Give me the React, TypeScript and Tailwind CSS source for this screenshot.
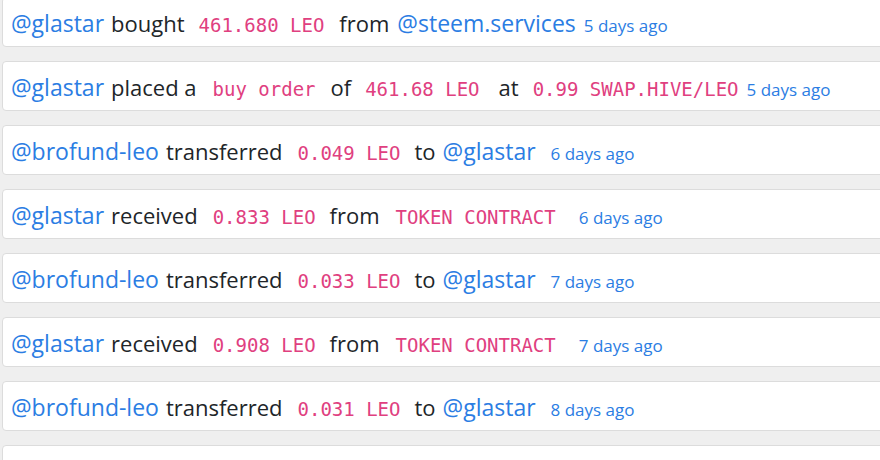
import React from 'react';

type Part = { t: string; k: 'user' | 'text' | 'code' | 'time'; ml: string };

const rows: Part[][] = [
  [
    { t: '@glastar', k: 'user', ml: '' },
    { t: 'bought', k: 'text', ml: 'ml-[7px]' },
    { t: '461.680 LEO', k: 'code', ml: 'ml-[14px]' },
    { t: 'from', k: 'text', ml: 'ml-[15px]' },
    { t: '@steem.services', k: 'user', ml: 'ml-[8px]' },
    { t: '5 days ago', k: 'time', ml: 'ml-[8px]' },
  ],
  [
    { t: '@glastar', k: 'user', ml: '' },
    { t: 'placed a', k: 'text', ml: 'ml-[7px]' },
    { t: 'buy order', k: 'code', ml: 'ml-[16px]' },
    { t: 'of', k: 'text', ml: 'ml-[15px]' },
    { t: '461.68 LEO', k: 'code', ml: 'ml-[14px]' },
    { t: 'at', k: 'text', ml: 'ml-[19px]' },
    { t: '0.99 SWAP.HIVE/LEO', k: 'code', ml: 'ml-[14px]' },
    { t: '5 days ago', k: 'time', ml: 'ml-[8px]' },
  ],
  [
    { t: '@brofund-leo', k: 'user', ml: '' },
    { t: 'transferred', k: 'text', ml: 'ml-[7px]' },
    { t: '0.049 LEO', k: 'code', ml: 'ml-[15px]' },
    { t: 'to', k: 'text', ml: 'ml-[14px]' },
    { t: '@glastar', k: 'user', ml: 'ml-[7px]' },
    { t: '6 days ago', k: 'time', ml: 'ml-[15px]' },
  ],
  [
    { t: '@glastar', k: 'user', ml: '' },
    { t: 'received', k: 'text', ml: 'ml-[7px]' },
    { t: '0.833 LEO', k: 'code', ml: 'ml-[15px]' },
    { t: 'from', k: 'text', ml: 'ml-[14px]' },
    { t: 'TOKEN CONTRACT', k: 'code', ml: 'ml-[16px]' },
    { t: '6 days ago', k: 'time', ml: 'ml-[23px]' },
  ],
  [
    { t: '@brofund-leo', k: 'user', ml: '' },
    { t: 'transferred', k: 'text', ml: 'ml-[7px]' },
    { t: '0.033 LEO', k: 'code', ml: 'ml-[15px]' },
    { t: 'to', k: 'text', ml: 'ml-[14px]' },
    { t: '@glastar', k: 'user', ml: 'ml-[7px]' },
    { t: '7 days ago', k: 'time', ml: 'ml-[15px]' },
  ],
  [
    { t: '@glastar', k: 'user', ml: '' },
    { t: 'received', k: 'text', ml: 'ml-[7px]' },
    { t: '0.908 LEO', k: 'code', ml: 'ml-[15px]' },
    { t: 'from', k: 'text', ml: 'ml-[14px]' },
    { t: 'TOKEN CONTRACT', k: 'code', ml: 'ml-[16px]' },
    { t: '7 days ago', k: 'time', ml: 'ml-[23px]' },
  ],
  [
    { t: '@brofund-leo', k: 'user', ml: '' },
    { t: 'transferred', k: 'text', ml: 'ml-[7px]' },
    { t: '0.031 LEO', k: 'code', ml: 'ml-[15px]' },
    { t: 'to', k: 'text', ml: 'ml-[14px]' },
    { t: '@glastar', k: 'user', ml: 'ml-[7px]' },
    { t: '8 days ago', k: 'time', ml: 'ml-[15px]' },
  ],
  [],
];

const kindClass = {
  user: 'text-[#2b7de3] text-[23px]',
  text: 'text-[#212529] text-[22px]',
  code: "text-[#e0407f] text-[19px] font-['DejaVu_Sans_Mono',monospace]",
  time: 'text-[#2b7de3] text-[17px]',
};

function Row({ parts }: { parts: Part[] }) {
  return (
    <div className="flex h-[50px] items-center whitespace-nowrap rounded border border-[#dcdcdc] bg-white pl-[8px] pt-[3px]">
      <div className="flex items-baseline">
        {parts.map((p, i) => (
          <span key={i} className={`${kindClass[p.k]} ${p.ml}`}>
            {p.t}
          </span>
        ))}
      </div>
    </div>
  );
}

export default function App() {
  return (
    <div className="h-[460px] w-[880px] overflow-hidden bg-[#efefef] font-['Open_Sans',sans-serif]">
      <div className="-mr-6 ml-[2px] -mt-[3px] flex flex-col gap-[14px]">
        {rows.map((r, i) => (
          <Row key={i} parts={r} />
        ))}
      </div>
    </div>
  );
}
